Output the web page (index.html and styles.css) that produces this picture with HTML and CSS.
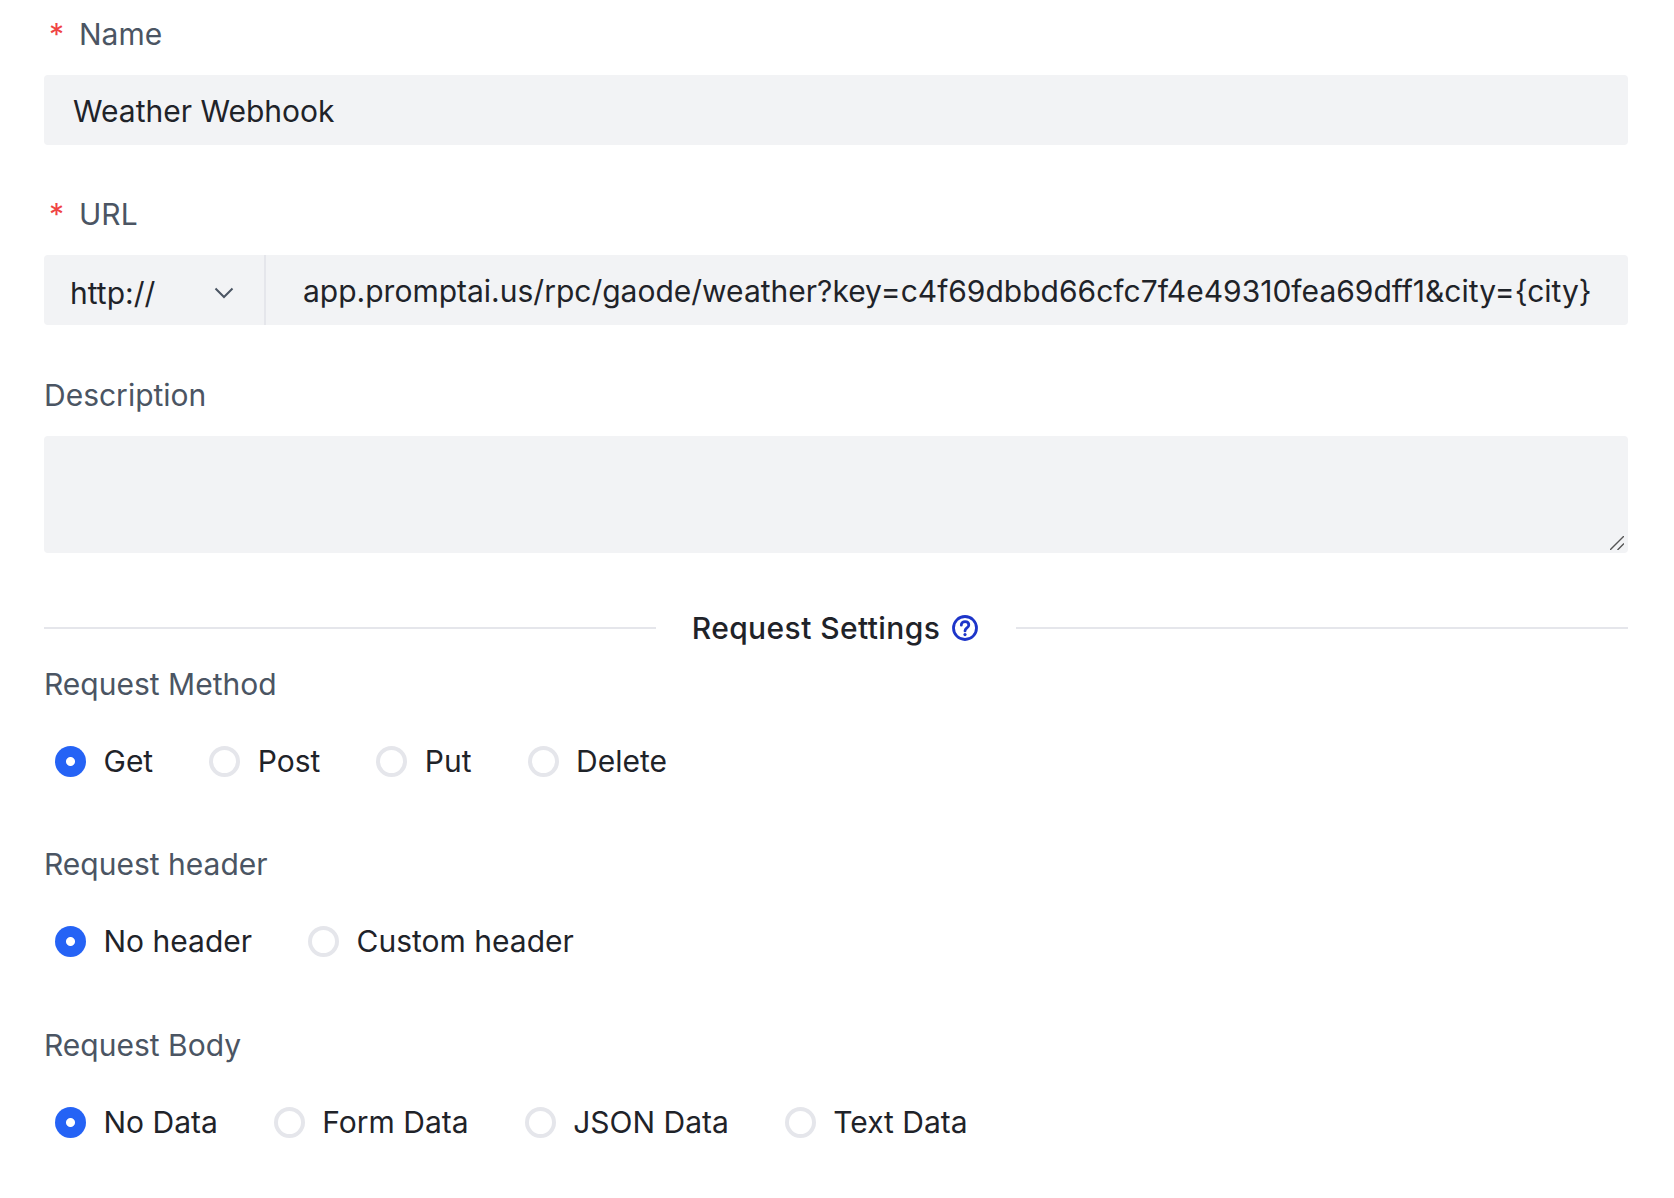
FILE: index.html
```html
<!doctype html>
<html lang="en-US">

<head>
	<title>Weather Webhook</title>
	<link rel="stylesheet" href="styles.css">
</head>

<body>
	<form class="form">
		<div class="field">
			<label class="label"><span class="star">*</span>Name</label>
			<input class="input" type="text" value="Weather Webhook">
		</div>

		<div class="field field-url">
			<label class="label"><span class="star">*</span>URL</label>
			<div class="url">
				<div class="protocol">
					<span>http://</span>
					<svg class="chevron" viewBox="0 0 20 12" fill="none" stroke="#4b5563" stroke-width="2">
						<path d="M1.5 1.5 10 10l8.5-8.5" />
					</svg>
				</div>
				<input class="url-input" type="text" value="app.promptai.us/rpc/gaode/weather?key=c4f69dbbd66cfc7f4e49310fea69dff1&amp;city={city}">
			</div>
		</div>

		<div class="field field-desc">
			<label class="label">Description</label>
			<div class="textarea-wrap">
				<textarea class="textarea"></textarea>
				<svg class="grip" viewBox="0 0 14 14" fill="none" stroke="#555" stroke-width="1.4">
					<path d="M0 14 14 0M7.5 14 14 7.5" />
				</svg>
			</div>
		</div>

		<div class="divider">
			<span class="divider-title">Request Settings</span>
			<svg class="help" viewBox="0 0 26 26" fill="none" stroke="#1d35c9" stroke-width="2.8">
				<circle cx="13" cy="13" r="11.5" />
				<path d="M9.3 10.2c0-2.2 1.6-3.6 3.8-3.6s3.7 1.4 3.7 3.3c0 3-3.8 3-3.8 6" stroke-linecap="round" />
				<circle cx="13" cy="19.6" r="1.6" fill="#1d35c9" stroke="none" />
			</svg>
		</div>

		<div class="group">
			<div class="label">Request Method</div>
			<div class="radios">
				<label class="radio on">Get</label>
				<label class="radio">Post</label>
				<label class="radio">Put</label>
				<label class="radio">Delete</label>
			</div>
		</div>

		<div class="group">
			<div class="label">Request header</div>
			<div class="radios">
				<label class="radio on">No header</label>
				<label class="radio">Custom header</label>
			</div>
		</div>

		<div class="group group-last">
			<div class="label">Request Body</div>
			<div class="radios">
				<label class="radio on">No Data</label>
				<label class="radio">Form Data</label>
				<label class="radio">JSON Data</label>
				<label class="radio">Text Data</label>
			</div>
		</div>
	</form>
</body>
</html>
```

FILE: styles.css
```css
body {
	margin: 0;
	background: #fff;
	color: #1f2329;
	font-family: Inter, "Noto Sans", sans-serif;
	font-size: 30px;
}

.form {
	padding: 14px 46px 0 44px;
}

.field {
	margin-bottom: 49px;
}

.field-url {
	margin-bottom: 50px;
}

.field-desc {
	margin-bottom: 55px;
}

.label {
	display: block;
	height: 40px;
	line-height: 40px;
	margin-bottom: 21px;
	color: #4b5563;
}

.star {
	display: inline-block;
	width: 35px;
	padding-left: 5px;
	box-sizing: border-box;
	color: #ef4444;
}

.input,
.url,
.textarea {
	display: block;
	width: 100%;
	box-sizing: border-box;
	border: 0;
	border-radius: 4px;
	background: #f2f3f5;
	color: #1f2329;
	font: inherit;
}

.input {
	height: 70px;
	padding: 2px 29px 0;
}

.url {
	display: flex;
	height: 70px;
}

.protocol {
	display: flex;
	align-items: center;
	justify-content: space-between;
	flex: none;
	width: 222px;
	box-sizing: border-box;
	padding: 5px 30px 0 26px;
	border-right: 2px solid #e5e6eb;
}

.chevron {
	width: 20px;
	height: 12px;
}

.url-input {
	flex: 1;
	min-width: 0;
	padding: 2px 36px 0 37px;
	border: 0;
	background: none;
	color: inherit;
	font: inherit;
}

.textarea-wrap {
	position: relative;
}

.textarea {
	height: 117px;
	resize: none;
}

.grip {
	position: absolute;
	right: 4px;
	bottom: 3px;
	width: 14px;
	height: 14px;
}

.divider {
	display: flex;
	align-items: center;
	height: 40px;
}

.divider::before,
.divider::after {
	content: "";
	flex: 1;
	height: 2px;
	background: #e5e6eb;
}

.divider::before {
	margin-right: 36px;
}

.divider::after {
	margin-left: 38px;
}

.divider-title {
	font-weight: 500;
	letter-spacing: 0.4px;
}

.help {
	width: 26px;
	height: 26px;
	margin-left: 12px;
}

.group {
	margin-top: 16px;
	height: 164px;
}

.group-last {
	margin-top: 17px;
}

.radios {
	display: flex;
	gap: 56px;
	padding-left: 11px;
	height: 40px;
	line-height: 40px;
	margin-top: 37px;
}

.radio {
	display: flex;
	align-items: center;
	gap: 17.5px;
}

.radio::before {
	content: "";
	width: 31px;
	height: 31px;
	box-sizing: border-box;
	border: 4px solid #e5e6eb;
	border-radius: 50%;
}

.radio.on::before {
	border: 0;
	background: radial-gradient(circle, #fff 0 4px, #2563f5 5px);
}
```
